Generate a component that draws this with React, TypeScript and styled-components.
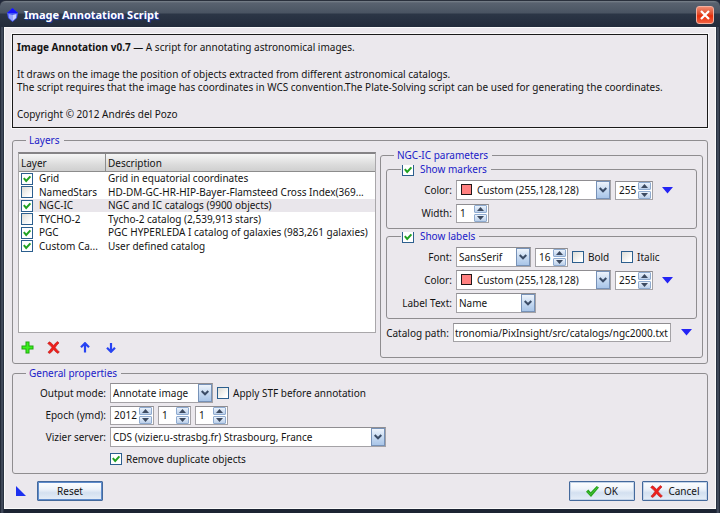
import React from "react";
import styled, { createGlobalStyle, css } from "styled-components";

const GlobalStyle = createGlobalStyle`
  *, *::before, *::after { box-sizing: border-box; }
  body { margin: 0; background: #20283a; }
  body, button, input, select {
    font-family: "Noto Sans", "Open Sans", sans-serif;
    font-size: 10px;
    line-height: 14px;
    color: #141414;
  }
`;

const edge = "#8f8d90";
const panel = "#ebe8ed";
const link = "#2020c8";

const Window = styled.main`
  display: flex;
  flex-direction: column;
  min-height: 100vh;
  padding: 0 4px 4px;
  background: linear-gradient(90deg, #161c2a 0, #4b5567 2px, #1c2433 4px, #1c2433 calc(100% - 4px), #4b5567 calc(100% - 2px), #161c2a 100%);
  border-radius: 6px 6px 0 0;
`;

const TitleBar = styled.header`
  display: flex;
  align-items: center;
  gap: 6px;
  height: 27px;
  margin: 0 -4px;
  padding: 2px 6px 0 7px;
  border-top: 1px solid #2a303c;
  border-radius: 6px 6px 0 0;
  background: linear-gradient(#7b838c 0, #59626f 2px, #4a5462 12px, #2c3646 13px, #222b3b 100%);
`;

const Title = styled.h1`
  flex: 1;
  margin: 0;
  font-size: 11px;
  line-height: 16px;
  font-weight: 700;
  color: #fff;
  text-shadow: 1px 1px 1px #1c3cb0;
`;

const CloseButton = styled.button`
  display: grid;
  place-items: center;
  width: 18px;
  height: 18px;
  padding: 0;
  border: 1px solid #f4b0a0;
  border-radius: 3px;
  background: linear-gradient(#f08a70, #e04a28 45%, #e82c08 55%, #f06040);
`;

const Body = styled.div`
  flex: 1;
  display: flex;
  flex-direction: column;
  padding: 6px 7px 7px;
  border: 1px solid #fafafa;
  background: ${panel};
`;

const Info = styled.section`
  padding: 6px 4px;
  border: 1px solid #1a1a1a;
  outline: 1px solid #faf9fb;
  line-height: 13px;

  p { margin: 0 0 14px; }
  p:last-child { margin-bottom: 0; }
`;

const Group = styled.fieldset`
  min-width: 0;
  margin: 0;
  padding: 0;
  border: 1px solid ${edge};
  border-radius: 3px;
`;

const LayersGroup = styled(Group)`
  flex: 1;
  display: flex;
  margin-top: 6px;
  padding: 2px 4px 5px 5px;
`;

const GeneralGroup = styled(Group)`
  margin-top: 3px;
  padding: 3px 5px 4px;
`;

const ParamsGroup = styled(Group)`
  padding: 1px 5px 15px;
`;

const OptionGroup = styled(Group)`
  margin-bottom: 1px;
  padding: 4px 5px 5px;
`;

const Legend = styled.legend`
  height: 13px;
  margin-left: 8px;
  padding: 0 4px 0 3px;
  line-height: 13px;
  color: ${link};
`;

const CheckLegend = styled(Legend)`
  margin-left: 9px;
  padding-left: 1px;

  label { gap: 6px; color: ${link}; line-height: 13px; }
`;

const Columns = styled.div`
  flex: 1;
  display: grid;
  grid-template-columns: minmax(0, 359fr) minmax(0, 324fr);
  gap: 4px;
`;

const ListColumn = styled.div`
  display: flex;
  flex-direction: column;
  padding-top: 3px;
`;

const ListBox = styled.div`
  flex: 1;
  border: 1px solid #a9a7aa;
  border-top: 2px solid #858386;
  background: #fff;
`;

const LayerTable = styled.table`
  width: 100%;
  table-layout: fixed;
  border-collapse: separate;
  border-spacing: 0;

  th {
    height: 18px;
    padding: 0 2px;
    text-align: left;
    font-weight: 400;
    border-bottom: 1px solid #8c8c8c;
    background: linear-gradient(#f6f6f6, #dcdcdc 60%, #cfcfcf);
  }
  th:first-child { width: 87px; border-right: 1px solid #8c8c8c; }
  td {
    padding: 0 2px;
    line-height: 13px;
    white-space: nowrap;
    overflow: hidden;
  }
`;

const LayerRow = styled.tr<{ $selected?: boolean }>`
  height: 13px;
  background: ${(p) => (p.$selected ? "#e9e6eb" : "transparent")};
  &:nth-child(even) { height: 14px; }
`;

const CheckLabel = styled.label<{ $gap?: number }>`
  display: flex;
  align-items: center;
  gap: ${(p) => p.$gap ?? 4}px;
  white-space: nowrap;
`;

const Check = styled.input.attrs({ type: "checkbox" })<{ $clipped?: boolean }>`
  appearance: none;
  flex: none;
  width: 12px;
  height: 12px;
  margin: 0;
  border: 1px solid #2c5f8e;
  background: linear-gradient(135deg, #dcdcd6, #fff 80%);
  ${(p) => p.$clipped && css`
    height: 11px;
    margin-top: 2px;
    border-top: 0;
  `}
  &:checked {
    background: url("data:image/svg+xml,%3Csvg xmlns='http://www.w3.org/2000/svg' viewBox='0 0 10 10'%3E%3Cpath d='M1.8 4.2 4.2 7 8.4 2.4' fill='none' stroke='%2321a121' stroke-width='2'/%3E%3C/svg%3E") center / 10px 10px no-repeat, #fff;
  }
`;

const ToolStrip = styled.div`
  display: flex;
  align-items: center;
  gap: 10px;
  height: 25px;
  padding: 4px 1px 0;
`;

const ToolButton = styled.button<{ $spaced?: boolean }>`
  display: grid;
  place-items: center;
  width: 16px;
  height: 16px;
  padding: 0;
  border: 0;
  background: none;
  margin-left: ${(p) => (p.$spaced ? 6 : 0)}px;
`;

const FormRows = styled.div<{ $gap: number }>`
  display: flex;
  flex-direction: column;
  gap: ${(p) => p.$gap}px;
`;

const FormRow = styled.div`
  display: flex;
  align-items: center;
  gap: 4px;
  height: 20px;
`;

const FieldLabel = styled.label<{ $width: number }>`
  flex: none;
  width: ${(p) => p.$width}px;
  text-align: right;
  white-space: nowrap;
`;

const CatalogRow = styled(FormRow)`
  height: 19px;
  margin-top: 4px;
  padding-right: 5px;
`;

const sunken = css`
  border: 1px solid #a4a2a6;
  border-top-color: #8f8d91;
  border-radius: 0;
  background: #fff;
`;

const ComboBox = styled.span<{ $width: number }>`
  position: relative;
  flex: 0 1 ${(p) => p.$width}px;
  min-width: 0;
  height: 20px;
`;

const Select = styled.select<{ $swatch?: boolean }>`
  appearance: none;
  width: 100%;
  height: 20px;
  padding: 0 16px 0 ${(p) => (p.$swatch ? 20 : 2)}px;
  outline: none;
  ${sunken}
`;

const ComboArrow = styled.span`
  position: absolute;
  top: 1px;
  right: 1px;
  display: grid;
  place-items: center;
  width: 14px;
  height: 18px;
  border: 1px solid #7792b8;
  background: linear-gradient(#eef4fc, #c4d8f0 55%, #a9c5e8);
  pointer-events: none;
`;

const Swatch = styled.span`
  position: absolute;
  top: 4px;
  left: 5px;
  width: 11px;
  height: 11px;
  border: 1px solid #201818;
  background: #ff8080;
  pointer-events: none;
`;

const SpinBox = styled.span<{ $width: number }>`
  display: flex;
  align-items: center;
  flex: none;
  width: ${(p) => p.$width}px;
  height: 19px;
  padding-right: 1px;
  ${sunken}
`;

const SpinInput = styled.input.attrs({ type: "number" })`
  appearance: textfield;
  flex: 1;
  min-width: 0;
  width: 0;
  padding: 0 0 0 3px;
  border: 0;
  outline: none;
  background: none;
  &::-webkit-inner-spin-button { display: none; }
`;

const SpinButtons = styled.span`
  display: flex;
  flex-direction: column;
  gap: 1px;
`;

const SpinButton = styled.button`
  display: grid;
  place-items: center;
  width: 13px;
  height: 8px;
  padding: 0;
  border: 1px solid #8fabd0;
  border-radius: 1px;
  background: linear-gradient(#eaf2fc, #bcd0ea);
`;

const PathInput = styled.input`
  flex: 1;
  min-width: 0;
  height: 19px;
  padding: 0 1px;
  outline: none;
  ${sunken}
`;

const ExpandButton = styled.button`
  display: grid;
  place-items: center;
  width: 12px;
  height: 12px;
  margin-left: 5px;
  padding: 0;
  border: 0;
  background: none;
`;

const Footer = styled.footer`
  display: flex;
  align-items: center;
  gap: 7px;
  margin-top: 7px;
  padding-left: 4px;
`;

const Spacer = styled.span`
  flex: 1;
`;

const PushButton = styled.button<{ $focused?: boolean }>`
  display: flex;
  align-items: center;
  justify-content: center;
  gap: 5px;
  width: 66px;
  height: 20px;
  padding: 0;
  border: 1px solid #44699c;
  border-radius: 1px;
  background: linear-gradient(#fdfeff, #eef3fa 40%, #d3e0f0 60%, #e6eef8);
  box-shadow: inset 0 0 0 1px ${(p) => (p.$focused ? "#5f8ccc" : "#c3d3e8")};
`;

const CornerMark = styled.button`
  display: grid;
  width: 10px;
  height: 10px;
  margin-right: 4px;
  padding: 0;
  border: 0;
  background: none;
`;

function AppIcon() {
  return (
    <svg width="11" height="14" viewBox="0 0 11 14" aria-hidden="true">
      <path d="M5.500 0 11 5 10 10 5.500 14 1 10 0 5Z" fill="#4658f4" />
      <path d="M5.500 0 11 5H0Z" fill="#1414ff" />
      <path d="M1.500 6 5.500 7v6L2 10Z" fill="#94a4ff" />
      <path d="M9.500 6 5.500 7v6L9 10Z" fill="#c4ceff" />
    </svg>
  );
}

function CrossIcon() {
  return (
    <svg width="13" height="13" viewBox="0 0 13 13" aria-hidden="true">
      <path
        d="M2.2.8C3.8 1.4 5.4 3 6.6 4.5 7.7 2.9 9 1.4 10.7.6L12 2C10.500 3.200 9.300 4.800 8.200 6.500 9.300 8.200 10.800 9.800 12.400 10.900L10.800 12.400C9 11.500 7.800 10 6.600 8.500 5.400 10.200 4.200 11.700 2.500 12.600L.9 11.200C2.500 10 3.800 8.300 4.900 6.500 3.800 4.900 2.300 3.500.7 2.600Z"
        fill="#ee201c"
        stroke="#b81c1c"
        strokeWidth=".6"
      />
    </svg>
  );
}

function PlusIcon() {
  return (
    <svg width="13" height="13" viewBox="0 0 13 13" aria-hidden="true">
      <path d="M4.500.500h4v4h4v4h-4v4h-4v-4h-4v-4h4Z" fill="#1fa80e" />
      <path d="M5.500 1.500h2v4h4v2h-4v4h-2v-4h-4v-2h4Z" fill="#3cf01c" />
    </svg>
  );
}

function ArrowIcon({ down }: { down?: boolean }) {
  return (
    <svg width="10" height="11" viewBox="0 0 10 11" aria-hidden="true">
      <path
        d={down ? "M5 10V1M1 5.800l4 4 4-4" : "M5 10.500V1.500M1 5.200l4-4 4 4"}
        fill="none"
        stroke="#2743f2"
        strokeWidth="2.200"
      />
    </svg>
  );
}

function TickIcon() {
  return (
    <svg width="13" height="11" viewBox="0 0 13 11" aria-hidden="true">
      <path d="M0 5.800 2.300 3.600 4.700 6.200 10.700 0 13 1.600 5 11Z" fill="#27a51c" />
      <path d="M1.500 5.800 4.800 8.500 11.500 1.300" fill="none" stroke="#4fcc3c" strokeWidth=".8" />
    </svg>
  );
}

function Expand({ label }: { label: string }) {
  return (
    <ExpandButton aria-label={label}>
      <svg width="11" height="7" viewBox="0 0 11 7" aria-hidden="true">
        <path d="M0 0h11L5.500 6.500Z" fill="#2424f4" />
      </svg>
    </ExpandButton>
  );
}

interface ComboProps {
  id: string;
  value: string;
  width: number;
  swatch?: boolean;
}

function Combo({ id, value, width, swatch }: ComboProps) {
  return (
    <ComboBox $width={width}>
      <Select id={id} $swatch={swatch}>
        <option>{value}</option>
      </Select>
      {swatch && <Swatch />}
      <ComboArrow>
        <svg width="8" height="6" viewBox="0 0 8 6" aria-hidden="true">
          <path d="M.7 1 4 4.300 7.300 1" fill="none" stroke="#3a4c66" strokeWidth="2" />
        </svg>
      </ComboArrow>
    </ComboBox>
  );
}

interface SpinProps {
  id?: string;
  label?: string;
  value: number;
  width: number;
}

function Spin({ id, label, value, width }: SpinProps) {
  return (
    <SpinBox $width={width}>
      <SpinInput id={id} aria-label={label} defaultValue={value} />
      <SpinButtons>
        <SpinButton aria-label="Increase" tabIndex={-1}>
          <svg width="7" height="4" viewBox="0 0 7 4" aria-hidden="true">
            <path d="M0 4h7L3.500 0Z" fill="#3c4a60" />
          </svg>
        </SpinButton>
        <SpinButton aria-label="Decrease" tabIndex={-1}>
          <svg width="7" height="4" viewBox="0 0 7 4" aria-hidden="true">
            <path d="M0 0h7L3.500 4Z" fill="#3c4a60" />
          </svg>
        </SpinButton>
      </SpinButtons>
    </SpinBox>
  );
}

const layers = [
  { name: "Grid", text: "Grid in equatorial coordinates", on: true },
  { name: "NamedStars", text: "HD-DM-GC-HR-HIP-Bayer-Flamsteed Cross Index(369...", on: false },
  { name: "NGC-IC", text: "NGC and IC catalogs (9900 objects)", on: true, selected: true },
  { name: "TYCHO-2", text: "Tycho-2 catalog (2,539,913 stars)", on: false },
  { name: "PGC", text: "PGC HYPERLEDA I catalog of galaxies (983,261 galaxies)", on: true },
  { name: "Custom Ca...", text: "User defined catalog", on: true },
];

export default function App() {
  return (
    <>
      <GlobalStyle />
      <Window>
        <TitleBar>
          <AppIcon />
          <Title>Image Annotation Script</Title>
          <CloseButton aria-label="Close">
            <svg width="10" height="10" viewBox="0 0 10 10" aria-hidden="true">
              <path d="m1 1 8 8M9 1 1 9" stroke="#fff" strokeWidth="2.200" />
            </svg>
          </CloseButton>
        </TitleBar>
        <Body>
          <Info>
            <p><strong>Image Annotation v0.7</strong> — A script for annotating astronomical images.</p>
            <p>
              It draws on the image the position of objects extracted from different astronomical catalogs.
              <br />
              The script requires that the image has coordinates in WCS convention.The Plate-Solving script can be used for generating the coordinates.
            </p>
            <p>Copyright © 2012 Andrés del Pozo</p>
          </Info>

          <LayersGroup>
            <Legend>Layers</Legend>
            <Columns>
              <ListColumn>
                <ListBox>
                  <LayerTable>
                    <thead>
                      <tr><th>Layer</th><th>Description</th></tr>
                    </thead>
                    <tbody>
                      {layers.map((l) => (
                        <LayerRow key={l.name} $selected={l.selected}>
                          <td>
                            <CheckLabel $gap={6}>
                              <Check defaultChecked={l.on} />
                              {l.name}
                            </CheckLabel>
                          </td>
                          <td>{l.text}</td>
                        </LayerRow>
                      ))}
                    </tbody>
                  </LayerTable>
                </ListBox>
                <ToolStrip>
                  <ToolButton aria-label="Add layer"><PlusIcon /></ToolButton>
                  <ToolButton aria-label="Remove layer"><CrossIcon /></ToolButton>
                  <ToolButton aria-label="Move up" $spaced><ArrowIcon /></ToolButton>
                  <ToolButton aria-label="Move down"><ArrowIcon down /></ToolButton>
                </ToolStrip>
              </ListColumn>

              <ParamsGroup>
                <Legend>NGC-IC parameters</Legend>
                <OptionGroup>
                  <CheckLegend>
                    <CheckLabel><Check $clipped defaultChecked />Show markers</CheckLabel>
                  </CheckLegend>
                  <FormRows $gap={3}>
                    <FormRow>
                      <FieldLabel $width={60} htmlFor="marker-color">Color:</FieldLabel>
                      <Combo id="marker-color" value="Custom (255,128,128)" width={155} swatch />
                      <Spin label="Marker opacity" value={255} width={38} />
                      <Expand label="Marker color options" />
                    </FormRow>
                    <FormRow>
                      <FieldLabel $width={60} htmlFor="marker-width">Width:</FieldLabel>
                      <Spin id="marker-width" value={1} width={33} />
                    </FormRow>
                  </FormRows>
                </OptionGroup>
                <OptionGroup>
                  <CheckLegend>
                    <CheckLabel><Check $clipped defaultChecked />Show labels</CheckLabel>
                  </CheckLegend>
                  <FormRows $gap={3}>
                    <FormRow>
                      <FieldLabel $width={60} htmlFor="label-font">Font:</FieldLabel>
                      <Combo id="label-font" value="SansSerif" width={75} />
                      <Spin label="Font size" value={16} width={33} />
                      <CheckLabel><Check />Bold</CheckLabel>
                      <Spacer />
                      <CheckLabel><Check />Italic</CheckLabel>
                      <Spacer />
                      <Spacer />
                      <Spacer />
                      <Spacer />
                    </FormRow>
                    <FormRow>
                      <FieldLabel $width={60} htmlFor="label-color">Color:</FieldLabel>
                      <Combo id="label-color" value="Custom (255,128,128)" width={155} swatch />
                      <Spin label="Label opacity" value={255} width={38} />
                      <Expand label="Label color options" />
                    </FormRow>
                    <FormRow>
                      <FieldLabel $width={60} htmlFor="label-text">Label Text:</FieldLabel>
                      <Combo id="label-text" value="Name" width={80} />
                    </FormRow>
                  </FormRows>
                </OptionGroup>
                <CatalogRow>
                  <FieldLabel $width={63} htmlFor="catalog-path">Catalog path:</FieldLabel>
                  <PathInput id="catalog-path" defaultValue="tronomia/PixInsight/src/catalogs/ngc2000.txt" />
                  <Expand label="Catalog options" />
                </CatalogRow>
              </ParamsGroup>
            </Columns>
          </LayersGroup>

          <GeneralGroup>
            <Legend>General properties</Legend>
            <FormRows $gap={2}>
              <FormRow>
                <FieldLabel $width={88} htmlFor="output-mode">Output mode:</FieldLabel>
                <Combo id="output-mode" value="Annotate image" width={103} />
                <CheckLabel><Check />Apply STF before annotation</CheckLabel>
              </FormRow>
              <FormRow>
                <FieldLabel $width={88} htmlFor="epoch-year">Epoch (ymd):</FieldLabel>
                <Spin id="epoch-year" value={2012} width={44} />
                <Spin label="Epoch month" value={1} width={33} />
                <Spin label="Epoch day" value={1} width={33} />
              </FormRow>
              <FormRow>
                <FieldLabel $width={88} htmlFor="vizier">Vizier server:</FieldLabel>
                <Combo id="vizier" value="CDS (vizier.u-strasbg.fr) Strasbourg, France" width={276} />
              </FormRow>
              <FormRow>
                <FieldLabel as="span" $width={88} />
                <CheckLabel><Check defaultChecked />Remove duplicate objects</CheckLabel>
              </FormRow>
            </FormRows>
          </GeneralGroup>

          <Footer>
            <CornerMark aria-label="New instance">
              <svg width="10" height="10" viewBox="0 0 10 10" aria-hidden="true">
                <path d="M0 0v10h10Z" fill="#1c30f0" />
              </svg>
            </CornerMark>
            <PushButton $focused>Reset</PushButton>
            <Spacer />
            <PushButton><TickIcon />OK</PushButton>
            <PushButton><CrossIcon />Cancel</PushButton>
          </Footer>
        </Body>
      </Window>
    </>
  );
}
